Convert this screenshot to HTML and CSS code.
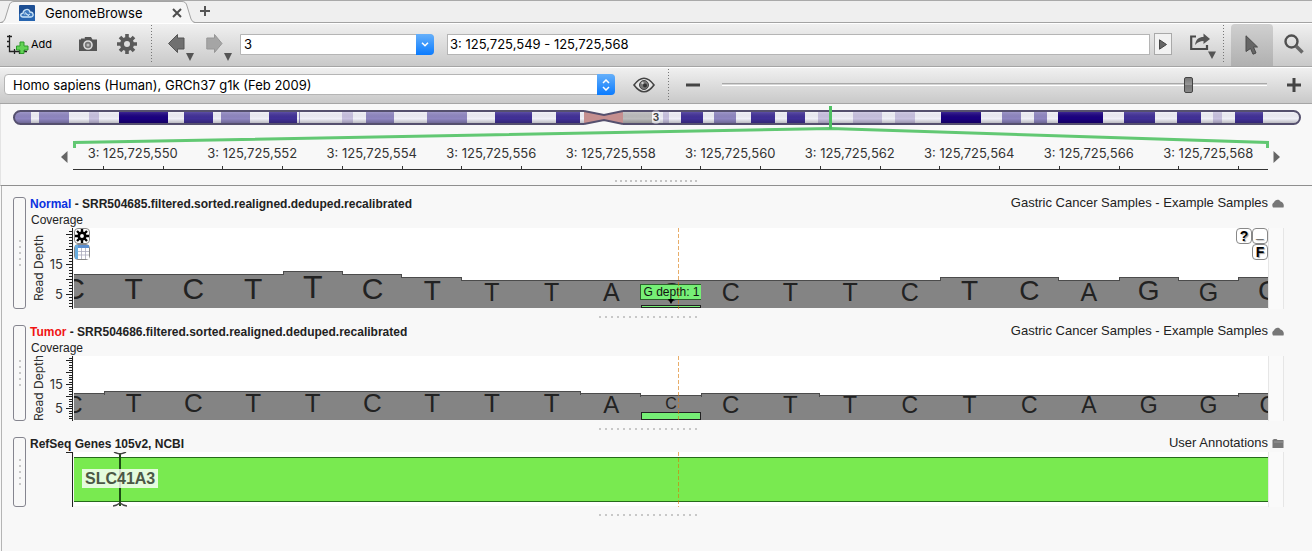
FILE: index.html
```html
<!DOCTYPE html>
<html lang="en">
<head>
  <meta charset="UTF-8" />
  <meta name="viewport" content="width=device-width, initial-scale=1.0" />
  <title>GenomeBrowse</title>
  <link rel="stylesheet" href="styles.css">
</head>
<body>
  <div class="tabs">
    <div class="tab">
      <svg class="tab-edge" width="13" height="22" viewBox="0 0 13 22"><path d="M1 22 Q3 21 4 18 L8 5 Q9 1 13 1 V22 Z" fill="#f6f6f6"/><path d="M0 21.500 Q3 21 4 18 L8 5 Q9 .5 13 .5" fill="none" stroke="#a3a3a3"/></svg>
      <div class="tab-body">
        <svg class="logo" width="16" height="16" viewBox="0 0 16 16">
          <rect width="16" height="16" rx="1" fill="#1d4f94"/>
          <rect y="9" width="16" height="7" fill="#2765b0"/>
          <path d="M4 12 C1 12 1 8.500 4 8.200 C4 4 10 3 11 7 C15 7 15 12 12 12 Z" fill="#3c78bd" stroke="#c9e3f7" stroke-width="1.300"/>
          <path d="M5 9.500 C7 7 8 12 11 9 M5.500 7 L10 11" fill="none" stroke="#c9e3f7"/>
        </svg>
        <span class="tab-name">GenomeBrowse</span>
        <button class="plain" aria-label="Close tab"><svg width="10" height="10" viewBox="0 0 10 10"><path d="M1 1 L9 9 M9 1 L1 9" stroke="#4d4d4d" stroke-width="2"/></svg></button>
      </div>
      <svg class="tab-edge" width="13" height="22" viewBox="0 0 13 22"><path d="M0 1 Q4 1 5 5 L9 18 Q10 21 13 22 H0 Z" fill="#f6f6f6"/><path d="M0 .5 Q4 .5 5 5 L9 18 Q10 21 13 21.500" fill="none" stroke="#a3a3a3"/></svg>
    </div>
    <button class="plain new-tab" aria-label="New tab"><svg width="12" height="12" viewBox="0 0 12 12"><path d="M6 1 V11 M1 6 H11" stroke="#555" stroke-width="2"/></svg></button>
  </div>

  <div class="toolbar main-bar">
    <button class="plain add">
      <svg width="22" height="20" viewBox="0 0 22 20">
        <path d="M2.500 1 V17.500 H20 M0 2.500 H5 M0 7.500 H3 M0 12.500 H3 M7.500 15 V20 M12.500 15 V20 M17.500 15 V18" fill="none" stroke="#222" stroke-width="1.300"/>
        <path d="M13 8 H17 V12 H21 V16 H17 V19.500 H13 V16 H9.500 V12 H13 Z" fill="#63d356" stroke="#2f9a2b"/>
      </svg>
      Add
    </button>
    <button class="plain camera" aria-label="Save image">
      <svg width="18" height="15" viewBox="0 0 18 15"><path d="M0 2.500 H2 V1.500 H5 V2.500 L6 0 H12 L13.500 2.500 H18 V14 H0 Z" fill="#555"/><circle cx="9" cy="8" r="4" fill="#777" stroke="#ddd" stroke-width="1.600"/><circle cx="9" cy="8" r="1.500" fill="#bbb"/></svg>
    </button>
    <button class="plain gear" aria-label="Settings">
      <svg width="20" height="20" viewBox="0 0 20 20"><path d="M10 0 V20 M0 10 H20 M3 3 L17 17 M17 3 L3 17" stroke="#5a5a5a" stroke-width="3.600"/><circle cx="10" cy="10" r="5" fill="#dedede" stroke="#5a5a5a" stroke-width="4"/></svg>
    </button>
    <i class="dots"></i>
    <button class="plain nav-btn back" aria-label="Back">
      <svg width="26" height="29" viewBox="0 0 26 29"><path d="M.5 10.500 L9.500 1.500 V5 H16 V16 H9.500 V19.500 Z" fill="#707070" stroke="#555"/><path d="M18 20 H26 L22 28 Z" fill="#555"/></svg>
    </button>
    <button class="plain nav-btn" aria-label="Forward">
      <svg width="26" height="29" viewBox="0 0 26 29"><path d="M16 10.500 L8.500 1.500 V5 H.8 V16 H8.500 V19.500 Z" fill="#a5a5a5" stroke="#969696"/><path d="M18 20 H26 L22 28 Z" fill="#555"/></svg>
    </button>
    <div class="combo chrom">
      <select aria-label="Chromosome"><option>3</option></select>
      <span class="combo-cap"><svg width="8" height="5" viewBox="0 0 8 5"><path d="M1 .8 L4 3.800 L7 .8" fill="none" stroke="#fff" stroke-width="1.500"/></svg></span>
    </div>
    <input class="region" type="text" aria-label="Region" value="3: 125,725,549 - 125,725,568">
    <button class="go" aria-label="Go"><svg width="8" height="11" viewBox="0 0 8 11"><path d="M.5 .8 L7.500 5.500 L.5 10.200 Z" fill="#666" stroke="#444"/></svg></button>
    <button class="plain export" aria-label="Export">
      <svg width="27" height="27" viewBox="0 0 27 27"><path d="M6 3.500 H1.200 V16 H17 V12" fill="none" stroke="#4a4a4a" stroke-width="2.200"/><path d="M5 12 C6 6 9 4 13.500 4 V.5 L20 6 L13.500 11 V8 C10 8 8 9 5 12 Z" fill="#555"/><path d="M18 18.500 H26 L22 26 Z" fill="#555"/></svg>
    </button>
    <i class="dots"></i>
    <button class="plain pointer" aria-label="Select">
      <svg width="14" height="20" viewBox="0 0 14 20"><path d="M1 .8 L12.500 12 H8.500 L11 18 L8 19.200 L5.500 13.500 L1 16.500 Z" fill="#666" stroke="#4a4a4a"/></svg>
    </button>
    <button class="plain lens" aria-label="Zoom">
      <svg width="20" height="20" viewBox="0 0 20 20"><circle cx="7.500" cy="7.500" r="6" fill="none" stroke="#505050" stroke-width="2.400"/><path d="M12 12 L18.500 18.500" stroke="#686868" stroke-width="3.600"/></svg>
    </button>
  </div>

  <div class="toolbar zoom-bar">
    <div class="combo assembly">
      <select aria-label="Assembly"><option>Homo sapiens (Human), GRCh37 g1k (Feb 2009)</option></select>
      <span class="combo-cap"><svg width="8" height="12" viewBox="0 0 8 12"><path d="M1 4 L4 1 L7 4 M1 8 L4 11 L7 8" fill="none" stroke="#fff" stroke-width="1.500"/></svg></span>
    </div>
    <button class="plain eye" aria-label="Visibility">
      <svg width="22" height="16" viewBox="0 0 22 16"><path d="M1 8 Q11 -5.500 21 8 Q11 21.500 1 8 Z" fill="#e6e6e6" stroke="#444" stroke-width="1.600"/><circle cx="11" cy="8" r="4.500" fill="#777" stroke="#444"/><circle cx="12" cy="8.500" r="2" fill="#333"/><circle cx="9.500" cy="6" r="1.200" fill="#ccc"/></svg>
    </button>
    <i class="dots"></i>
    <button class="plain minus" aria-label="Zoom out"><svg width="14" height="14" viewBox="0 0 14 14"><path d="M0 7 H14" stroke="#444" stroke-width="3"/></svg></button>
    <input class="zoom" type="range" min="0" max="1000" value="862" aria-label="Zoom level">
    <button class="plain plus" aria-label="Zoom in"><svg width="14" height="14" viewBox="0 0 14 14"><path d="M0 7 H14 M7 0 V14" stroke="#444" stroke-width="3"/></svg></button>
  </div>

  <div class="navigator">
    <div class="ideogram">
      <svg id="ideogram" width="100%" height="46" viewBox="0 0 1312 46" preserveAspectRatio="none"></svg>
      <span class="chrom-name">3</span>
    </div>
    <div class="ruler">
      <button class="plain" aria-label="Pan left"><svg width="7" height="12" viewBox="0 0 7 12"><path d="M0 6 L6.500 0 V12 Z" fill="#666"/></svg></button>
      <div class="scale">
        <div class="scale-labels" id="labels"></div>
        <svg class="scale-ticks" id="ticks" width="100%" height="4"></svg>
      </div>
      <button class="plain" aria-label="Pan right"><svg width="7" height="12" viewBox="0 0 7 12"><path d="M7 6 L.5 0 V12 Z" fill="#666"/></svg></button>
    </div>
    <div class="nav-grip"><i></i></div>
  </div>

  <div class="tracks">
    <div class="track">
      <div class="handle"></div>
      <div class="track-body">
        <div class="track-head">
          <span class="name"><b class="normal">Normal</b> - SRR504685.filtered.sorted.realigned.deduped.recalibrated</span>
          <span class="source">Gastric Cancer Samples - Example Samples</span>
          <svg class="cloud" width="12" height="9" viewBox="0 0 12 9"><path d="M1 8.500 C-.5 6 .5 4 2 3.500 C3 0 7.500 0 8.500 2.500 C11 3 12.500 6 11.500 8.500 Z" fill="#777"/></svg>
        </div>
        <div class="sub">Coverage</div>
        <div class="row">
          <svg class="axis" data-height="81" data-unit="3"></svg>
          <div class="plot">
            <div class="bases" id="normal"></div>
            <div class="cursor"></div>
            <div class="tools-left">
              <button class="mini" aria-label="Track settings"><svg width="14" height="14" viewBox="0 0 14 14"><path d="M7 0 V14 M0 7 H14 M2 2 L12 12 M12 2 L2 12" stroke="#000" stroke-width="2.400"/><circle cx="7" cy="7" r="3.200" fill="#fff" stroke="#000" stroke-width="2.600"/></svg></button>
              <button class="mini" aria-label="Table"><svg width="14" height="14" viewBox="0 0 14 14"><rect width="14" height="14" fill="#fff"/><rect width="14" height="3" fill="#5b8fd0"/><rect width="3" height="14" fill="#69aee0"/><path d="M3 6.500 H14 M3 10 H14 M6.500 3 V14 M10.500 3 V14" stroke="#aab" stroke-width=".8"/></svg></button>
            </div>
            <div class="tools-right">
              <button class="mini">?</button>
              <button class="mini low">_</button>
              <button class="mini">F</button>
            </div>
          </div>
          <div class="gutter"></div>
        </div>
      </div>
    </div>
    <div class="grip"></div>

    <div class="track">
      <div class="handle"></div>
      <div class="track-body">
        <div class="track-head">
          <span class="name"><b class="tumor">Tumor</b> - SRR504686.filtered.sorted.realigned.deduped.recalibrated</span>
          <span class="source">Gastric Cancer Samples - Example Samples</span>
          <svg class="cloud" width="12" height="9" viewBox="0 0 12 9"><path d="M1 8.500 C-.5 6 .5 4 2 3.500 C3 0 7.500 0 8.500 2.500 C11 3 12.500 6 11.500 8.500 Z" fill="#777"/></svg>
        </div>
        <div class="sub">Coverage</div>
        <div class="row">
          <svg class="axis" data-height="65" data-unit="2.42"></svg>
          <div class="plot">
            <div class="bases" id="tumor"></div>
            <div class="cursor"></div>
          </div>
          <div class="gutter"></div>
        </div>
      </div>
    </div>
    <div class="grip"></div>

    <div class="track">
      <div class="handle"></div>
      <div class="track-body">
        <div class="track-head">
          <span class="name">RefSeq Genes 105v2, NCBI</span>
          <span class="source">User Annotations</span>
          <svg class="cloud" width="12" height="9" viewBox="0 0 12 9"><path d="M.5 9 V1 L2 0 H4.500 L5.500 1 H11.500 V9 Z" fill="#777"/><path d="M2 3 H11.500" stroke="#999"/></svg>
        </div>
        <div class="row">
          <svg class="axis" data-height="55" data-unit="0"></svg>
          <div class="plot genes">
            <div class="gene"></div>
            <svg class="strand" width="14" height="55" viewBox="0 0 14 55"><path d="M7 1 V54" stroke="#1d4d14" stroke-width="2"/><path d="M1 0 Q3 1 7 2 Q11 1 13 0 M0 54 Q4 53.500 7 51 Q10 53.500 14 54" fill="none" stroke="#444" stroke-width="1.500"/></svg>
            <span class="gene-name">SLC41A3</span>
            <div class="cursor"></div>
          </div>
          <div class="gutter"></div>
        </div>
      </div>
    </div>
    <div class="grip"></div>
  </div>

  <script src="script.js"></script>
</body>
</html>
```

FILE: styles.css
```css
body {
  margin: 0;
  min-height: 100vh;
  display: flex;
  flex-direction: column;
  background-color: #f8f8f8;
  font-family: Inter, "Liberation Sans", sans-serif;
  font-size: 13px;
  color: #000;
}
svg {
  display: block;
}
button {
  font-family: inherit;
}
.plain {
  display: flex;
  align-items: center;
  padding: 0;
  border: none;
  background: none;
}

/* tabs */
.tabs {
  display: flex;
  height: 21px;
  padding-left: 1px;
  background-color: #efefef;
  border-top: 1px solid #a9a9a9;
  border-bottom: 1px solid #a3a3a3;
}
.tab {
  display: flex;
  height: 22px;
}
.tab-body {
  display: flex;
  align-items: center;
  width: 168px;
  background-color: #f6f6f6;
  border-top: 1px solid #a3a3a3;
}
.logo {
  margin-left: 5px;
}
.tab-name {
  flex: 1;
  margin-left: 10px;
}
.new-tab {
  margin: 0 0 2px 4px;
}

/* toolbars */
.toolbar {
  display: flex;
  align-items: center;
  padding-bottom: 2px;
  background: linear-gradient(#f0f0f0, #c9c9c9);
  border-top: 1px solid #fff;
  border-bottom: 1px solid #a5a5a5;
}
.main-bar {
  height: 40px;
}
.zoom-bar {
  height: 33px;
}
.dots {
  align-self: stretch;
  width: 1px;
  margin: 1px 0 0;
  background: repeating-linear-gradient(#777 0 1px, transparent 1px 3px);
}
.add {
  gap: 2px;
  margin-left: 7px;
  font-size: 11px;
  color: #000;
}
.camera {
  margin-left: 27px;
}
.gear {
  margin-left: 20px;
}
.main-bar .dots {
  margin-left: 14px;
}
.nav-btn {
  align-self: flex-end;
  margin: 0 0 2px 12px;
}
.nav-btn.back {
  margin-left: 16px;
}
.combo {
  position: relative;
}
.combo select {
  appearance: none;
  display: block;
  width: 100%;
  height: 21px;
  padding: 0 24px 0 3px;
  border: 1px solid #b5b5b5;
  border-radius: 0 4px 4px 0;
  background-color: #fff;
  font: inherit;
  color: #000;
}
.combo-cap {
  position: absolute;
  top: 0;
  right: 0;
  display: flex;
  align-items: center;
  justify-content: center;
  width: 18px;
  height: 21px;
  border-radius: 0 4px 4px 0;
  background: linear-gradient(#66b0fa, #0a7bff);
  pointer-events: none;
}
.chrom {
  width: 194px;
  margin-left: 8px;
}
.region {
  flex: 1;
  min-width: 0;
  height: 21px;
  box-sizing: border-box;
  margin-left: 13px;
  padding: 0 2px;
  border: 1px solid #b5b5b5;
  font: inherit;
}
.go {
  display: flex;
  align-items: center;
  justify-content: center;
  width: 18px;
  height: 22px;
  margin-left: 4px;
  padding: 0;
  border: 1px solid #a9a9a9;
  background-color: #f2f2f2;
}
.export {
  margin: 5px 0 0 18px;
}
.main-bar .export + .dots {
  margin-left: 6px;
}
.pointer {
  align-self: stretch;
  justify-content: center;
  width: 42px;
  margin: 0 0 -2px 7px;
  border-radius: 4px 4px 0 0;
  background: linear-gradient(#d0d0d0, #b0b0b0);
}
.lens {
  margin: 0 8px 0 11px;
}
.assembly {
  flex: 610;
  margin-left: 4px;
}
.assembly select {
  padding-left: 8px;
  border-radius: 4px;
}
.eye {
  margin: 0 13px 0 18px;
}
.minus {
  margin: 0 22px 0 17px;
}
.zoom {
  appearance: none;
  flex: 545;
  min-width: 0;
  height: 16px;
  margin: 0;
  background: linear-gradient(transparent 6px, #a9a9a9 6px 7px, #d5d5d5 7px 8px, #fff 8px 9px, transparent 9px);
}
.zoom::-webkit-slider-thumb {
  appearance: none;
  width: 9px;
  height: 16px;
  border: 1px solid #444;
  border-radius: 2px;
  background: linear-gradient(#777, #999 50%, #777 50%, #888);
}
.plus {
  margin: 0 11px 0 20px;
}

/* navigator */
.navigator {
  border-left: 1px solid #e4e4e4;
  border-bottom: 1px solid #8f8f8f;
}
.ideogram {
  position: relative;
  margin-left: -1px;
}
.chrom-name {
  position: absolute;
  top: 6px;
  left: 50%;
  width: 8px;
  margin-left: -4px;
  border-radius: 5px;
  background-color: rgba(255, 255, 255, .4);
  font-size: 10px;
  font-weight: bold;
  line-height: 14px;
  text-align: center;
  color: #444;
}
.ruler {
  display: flex;
  align-items: flex-start;
  margin: -6px 32px 0 60px;
}
.ruler .plain {
  margin-top: 7px;
}
.scale {
  flex: 1;
  margin: 0 5px;
}
.scale-labels {
  display: grid;
  grid-template-columns: repeat(10, 1fr);
  height: 22px;
  line-height: 18px;
  text-align: center;
  color: #333;
}
.nav-grip {
  height: 15px;
  display: flex;
  justify-content: center;
  align-items: flex-end;
}
.nav-grip i {
  width: 84px;
  height: 2px;
  margin-bottom: 3px;
  background: repeating-linear-gradient(90deg, #c4c4c4 0 2px, transparent 2px 5px);
}

/* tracks */
.tracks {
  flex: 1;
  margin-left: 1px;
  padding: 11px 28px 0 11px;
  border-left: 1px solid #b5b5b5;
  font-family: "Liberation Sans", Arial, sans-serif;
  color: #222;
}
.track {
  display: flex;
  gap: 4px;
}
.handle {
  width: 11px;
  border: 1px solid #85858f;
  border-radius: 3px;
  background: repeating-linear-gradient(#c8c8c8 0 2px, transparent 2px 6px) center / 2px 26px no-repeat;
}
.track-body {
  flex: 1;
  min-width: 0;
}
.track-head {
  display: flex;
  height: 15px;
  line-height: 14px;
}
.name {
  flex: 1;
  font-size: 12px;
  font-weight: bold;
}
.normal {
  color: #0a32e0;
}
.tumor {
  color: #f01414;
}
.source {
  font-size: 13px;
  line-height: 12px;
}
.cloud {
  margin: 2px 0 0 4px;
}
.sub {
  height: 16px;
  padding-left: 1px;
  font-size: 12px;
  line-height: 16px;
}
.row {
  display: flex;
}
.axis {
  flex: none;
  margin-right: 1px;
  font-family: Inter, sans-serif;
  fill: #333;
}
.plot {
  position: relative;
  flex: 1;
  min-width: 0;
  background: linear-gradient(#fff, #fff) 0 0 / 100% calc(100% - 1px) no-repeat;
}
.gutter {
  width: 14px;
  border: solid #e6e6e6;
  border-width: 0 1px;
  background-color: #fafafa;
}
.bases {
  display: flex;
  align-items: flex-end;
  height: calc(100% - 1px);
  overflow: hidden;
}
.base {
  position: relative;
  flex: 2 1 0;
  min-width: 0;
  box-sizing: border-box;
  display: flex;
  justify-content: center;
  align-items: center;
  padding-bottom: 5px;
  border-top: 1px solid #4c4c4c;
  background-color: #848484;
}
.base.first, .base.last {
  flex-grow: 1;
  overflow: hidden;
}
.base.first span {
  margin-left: -100%;
}
.base.last span {
  margin-right: -100%;
}
.base.rise::before, .base.fall::after {
  content: "";
  position: absolute;
  top: 0;
  width: 1px;
  height: 3px;
  background-color: #4c4c4c;
}
.base.rise::before {
  left: 0;
}
.base.fall::after {
  right: 0;
}
.base.alt {
  padding-bottom: 9px;
}
.variant {
  position: absolute;
  left: 0;
  right: 0;
  bottom: 0;
  box-sizing: border-box;
  border: 1px solid #222;
  background-color: #76ef76;
}
.tip {
  position: absolute;
  left: 50%;
  bottom: 8px;
  width: 61px;
  height: 14px;
  margin-left: -31px;
  border: 1px solid #2c602c;
  background-color: #76ef76;
  font-size: 12px;
  line-height: 14px;
  text-align: center;
  white-space: nowrap;
  color: #111;
}
.tip::after {
  content: "";
  position: absolute;
  top: 14px;
  left: 27px;
  border: solid transparent;
  border-width: 5px 3px 0;
  border-top-color: #000;
}
.cursor {
  position: absolute;
  top: 0;
  bottom: 0;
  left: 50.6%;
  width: 1px;
  background: repeating-linear-gradient(rgba(217, 119, 6, .6) 0 4px, transparent 4px 6px);
}
.tools-left {
  position: absolute;
  top: 0;
  left: 0;
}
.tools-right {
  position: absolute;
  top: 0;
  right: 0;
  display: flex;
  flex-wrap: wrap;
  justify-content: flex-end;
  width: 32px;
}
.mini {
  display: flex;
  align-items: center;
  justify-content: center;
  width: 16px;
  height: 16px;
  padding: 0;
  border: 1px solid #888;
  border-radius: 4px;
  background-color: #fff;
  font-size: 14px;
  font-weight: bold;
  line-height: 14px;
  color: #000;
  text-shadow: 1px 1px 1px #999;
}
.mini.low {
  padding-bottom: 6px;
}
.gene {
  box-sizing: border-box;
  height: 45px;
  margin: 5px 0;
  border: solid #256b1b;
  border-width: 1px 0;
  background-color: #79ea50;
}
.strand {
  position: absolute;
  top: 0;
  left: 39px;
}
.gene-name {
  position: absolute;
  top: 17px;
  left: 8px;
  padding: 0 3px;
  background-color: rgba(255, 255, 255, .8);
  font-size: 16px;
  font-weight: bold;
  line-height: 19px;
  color: #4b5845;
}
.grip {
  height: 16px;
  background: repeating-linear-gradient(90deg, #c8c8c8 0 2px, transparent 2px 6px) center 7px / 100px 2px no-repeat;
}
```

FILE: script.js
```javascript
const SVG = 'http://www.w3.org/2000/svg';

function draw(parent, tag, attrs, text) {
  const el = document.createElementNS(SVG, tag);
  for (const key in attrs) el.setAttribute(key, attrs[key]);
  if (text) el.textContent = text;
  parent.appendChild(el);
}

// chromosome bands: start, end, stain
const stains = { a: '#c8c1e0', b: '#8f86c1', c: '#413097', d: '#1a0080', g: '#bcbcbc' };
const bands = [
  [15, 31, 'b'], [39, 69, 'b'], [89, 99, 'a'], [119, 168, 'd'], [184, 213, 'c'], [221, 250, 'b'],
  [269, 297, 'c'], [299, 300, 'b'], [342, 353, 'a'], [366, 394, 'b'], [427, 467, 'b'], [495, 532, 'c'],
  [556, 580, 'c'], [623, 652, 'g'], [663, 669, 'a'], [681, 703, 'c'], [714, 736, 'b'], [751, 775, 'c'],
  [787, 805, 'c'], [818, 832, 'a'], [853, 882, 'a'], [895, 915, 'a'], [941, 981, 'd'], [1002, 1021, 'b'],
  [1034, 1047, 'b'], [1058, 1103, 'd'], [1124, 1155, 'c'], [1177, 1201, 'c'], [1213, 1222, 'a'], [1235, 1263, 'c']
];

function drawIdeogram() {
  const svg = document.getElementById('ideogram');
  svg.innerHTML = '<defs><clipPath id="body"><rect x="14" y="7" width="1286" height="13" rx="6.5"/></clipPath>' +
    '<linearGradient id="shade" x2="0" y2="1"><stop offset="0" stop-color="#fff" stop-opacity=".15"/>' +
    '<stop offset=".6" stop-color="#000" stop-opacity="0"/><stop offset="1" stop-color="#000" stop-opacity=".22"/></linearGradient></defs>';
  draw(svg, 'rect', { x: 14, y: 7, width: 1286, height: 13, rx: 6.5, fill: '#f0f0f8' });
  bands.forEach(b => draw(svg, 'rect', { x: b[0], y: 7, width: b[1] - b[0], height: 13, fill: stains[b[2]], 'clip-path': 'url(#body)' }));
  draw(svg, 'rect', { x: 14, y: 8, width: 1286, height: 11, fill: 'url(#shade)', 'clip-path': 'url(#body)' });
  draw(svg, 'rect', { x: 14, y: 7, width: 1286, height: 13, rx: 6.5, fill: 'none', stroke: '#55506e', 'stroke-width': 2 });
  // centromere
  draw(svg, 'rect', { x: 584, y: 5, width: 39, height: 17, fill: '#f8f8f8' });
  draw(svg, 'path', { d: 'M584 7 L604 11 L623 7 V20 L604 16 L584 20 Z', fill: '#c58f8f' });
  draw(svg, 'path', { d: 'M584 7 L604 11 L623 7 M584 20 L604 16 L623 20', fill: 'none', stroke: '#55506e', 'stroke-width': 2 });
  // visible region
  draw(svg, 'path', { d: 'M74.500 44 V38.500 L830.500 24.500 L1267.500 38.500 V44', fill: 'none', stroke: '#62c873', 'stroke-width': 3 });
  draw(svg, 'path', { d: 'M830.500 2 V25', stroke: '#4fc163', 'stroke-width': 3 });
}

function drawRuler() {
  const labels = document.getElementById('labels');
  const ticks = document.getElementById('ticks');
  for (let pos = 550; pos <= 568; pos += 2) {
    const label = document.createElement('span');
    label.textContent = '3: 125,725,' + pos;
    labels.appendChild(label);
  }
  draw(ticks, 'rect', { x: 0, y: 3, width: '100%', height: 1, fill: '#333' });
  for (let i = 0; i < 20; i++) {
    draw(ticks, 'rect', { x: (i * 5 + 2.5) + '%', y: 0, width: 1, height: 4, fill: '#333', 'shape-rendering': 'crispEdges' });
  }
}

function drawAxis(svg) {
  const height = Number(svg.dataset.height);
  const unit = Number(svg.dataset.unit);
  svg.setAttribute('width', 43);
  svg.setAttribute('height', height);
  draw(svg, 'rect', { x: 42, y: 0, width: 1, height: height, fill: '#222' });
  if (!unit) {
    draw(svg, 'rect', { x: 36, y: 0, width: 6, height: 1, fill: '#222' });
    return;
  }
  for (let d = 1; height - d * unit > 0; d++) {
    const major = d % 5 === 0;
    draw(svg, 'rect', { x: major ? 36 : 39, y: Math.floor(height - d * unit), width: major ? 6 : 3, height: 1, fill: '#222' });
  }
  [5, 15].forEach(d => draw(svg, 'text', { x: 33, y: Math.floor(height - d * unit) + 5, 'text-anchor': 'end', 'font-size': 13 }, String(d)));
  const middle = height === 81 ? 40 : 32;
  draw(svg, 'text', { transform: 'translate(13 ' + middle + ') rotate(-90)', 'text-anchor': 'middle', 'font-size': 12 }, 'Read Depth');
}

function drawBases(id, depths, heights, sizes) {
  const box = document.getElementById(id);
  const sequence = 'CTCTTCTTTACCTTCTCAGGC';
  depths.forEach((depth, i) => {
    const base = document.createElement('div');
    base.className = 'base';
    if (i === 0) base.classList.add('first');
    if (i === depths.length - 1) base.classList.add('last');
    if (depth > depths[i - 1]) base.classList.add('rise');
    if (depth > depths[i + 1]) base.classList.add('fall');
    base.style.height = heights[depth] + 'px';
    base.style.fontSize = sizes[depth] + 'px';
    base.innerHTML = '<span>' + sequence[i] + '</span>';
    box.appendChild(base);
  });
  return box.children[10];
}

drawIdeogram();
drawRuler();
document.querySelectorAll('.axis').forEach(drawAxis);

const normal = drawBases('normal',
  [12, 12, 12, 12, 13, 12, 11, 10, 10, 10, 10, 10, 10, 10, 10, 11, 11, 10, 11, 10, 11],
  { 10: 28, 11: 31, 12: 34, 13: 37 }, { 10: 25, 11: 28, 12: 30, 13: 32 });
normal.innerHTML += '<div class="variant" style="height:3px"></div><div class="tip">G depth: 1</div>';

const tumor = drawBases('tumor',
  [11, 12, 12, 12, 12, 12, 12, 12, 12, 11, 10, 11, 11, 10, 10, 10, 10, 10, 10, 10, 11],
  { 10: 25, 11: 27, 12: 29 }, { 10: 23, 11: 24, 12: 26 });
tumor.classList.add('alt');
tumor.style.fontSize = '16px';
tumor.innerHTML += '<div class="variant" style="height:8px"></div>';
```
